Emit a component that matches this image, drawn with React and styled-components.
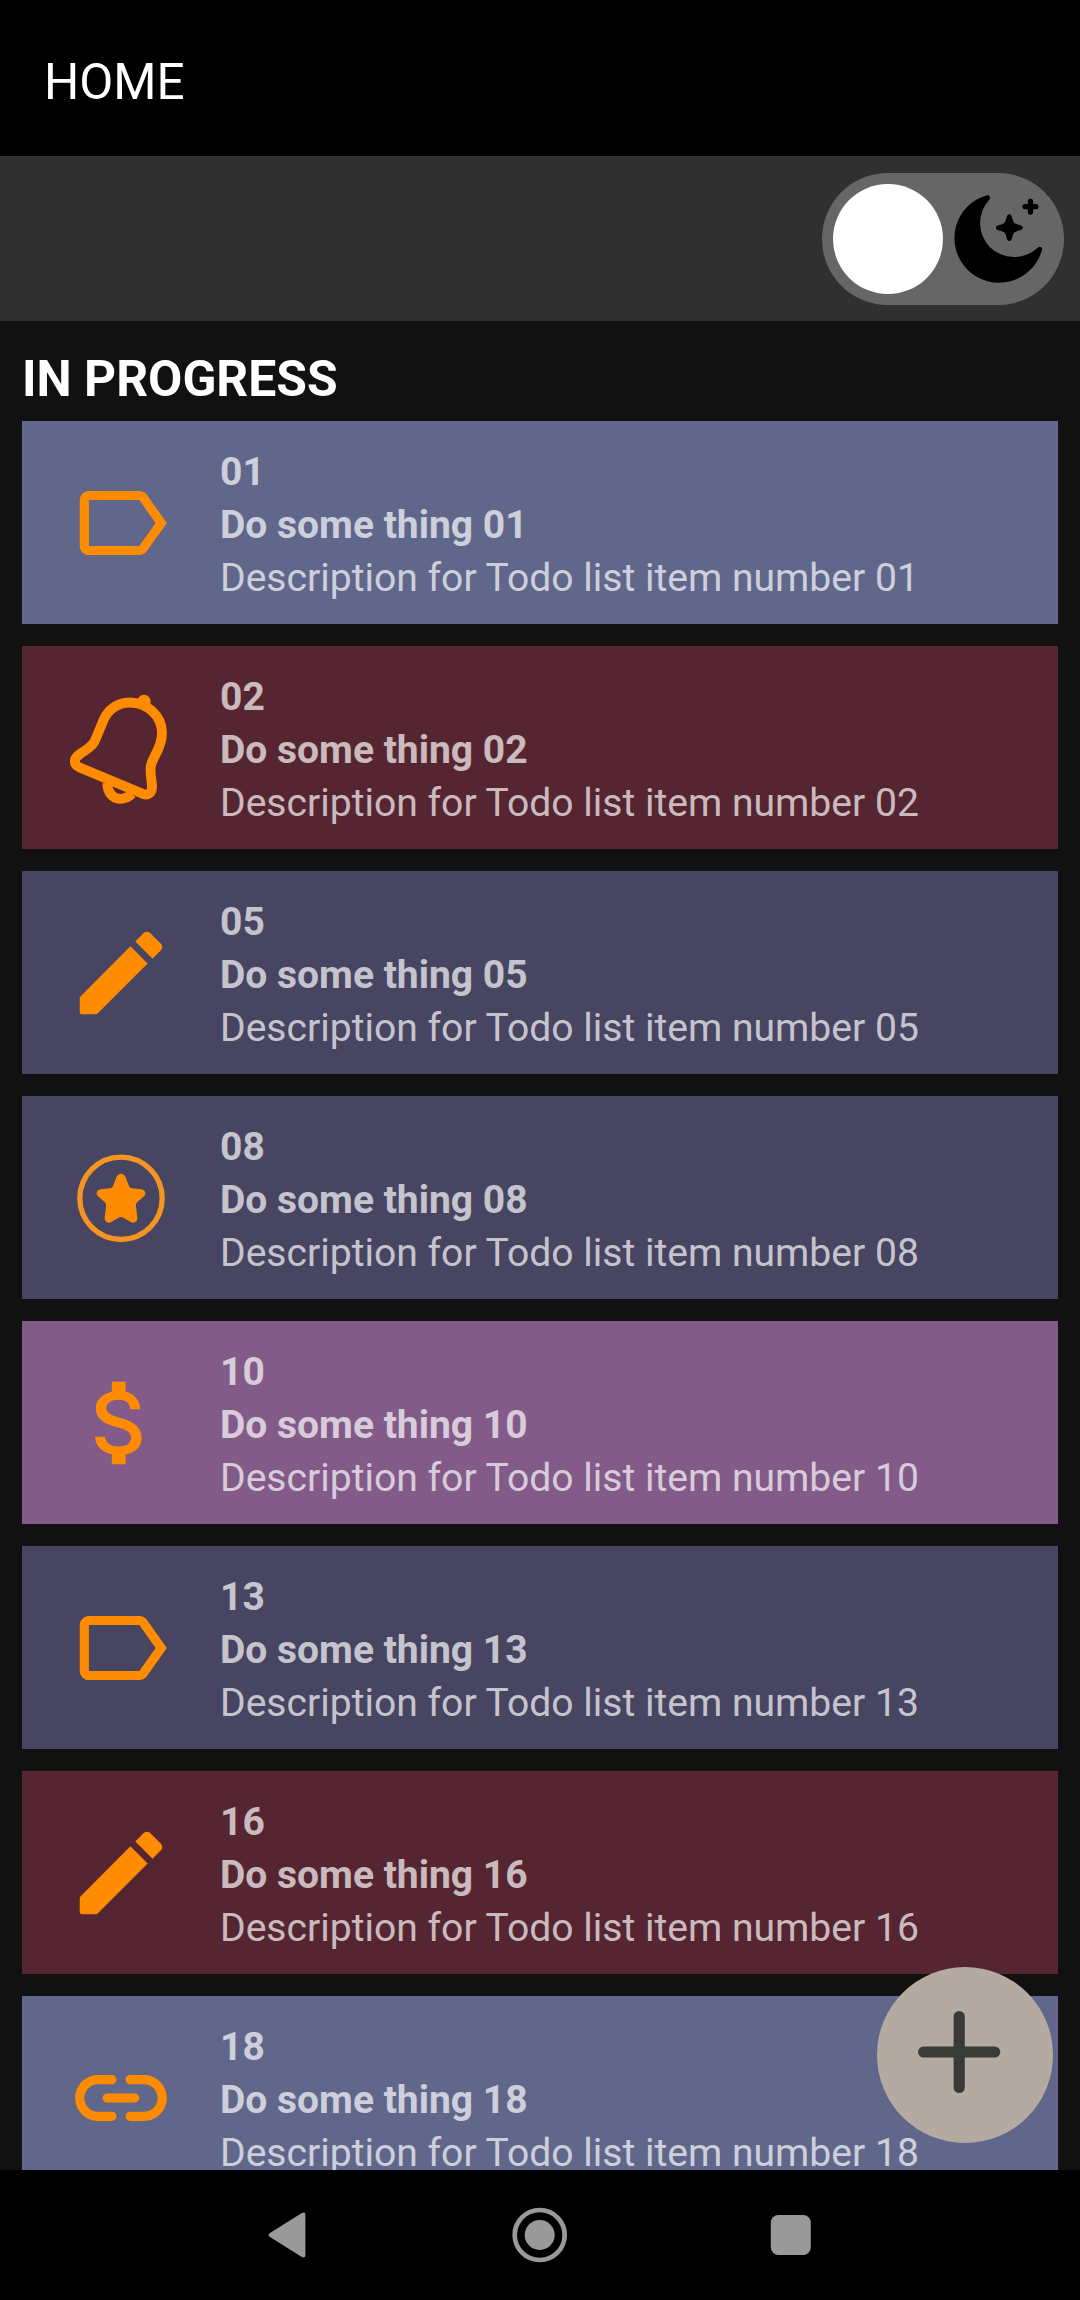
import React from "react";
import styled, { createGlobalStyle } from "styled-components";

const GlobalStyle = createGlobalStyle`
  *, *::before, *::after { box-sizing: border-box; }
  body { margin: 0; background: #000; }
`;

const Screen = styled.div`
  position: relative;
  display: flex;
  flex-direction: column;
  width: 1080px;
  height: 2300px;
  overflow: hidden;
  background: #111111;
  color: #fff;
  font-family: Roboto, "Liberation Sans", sans-serif;
`;

const Header = styled.header`
  flex: none;
  display: flex;
  align-items: center;
  height: 156px;
  padding: 8px 44px 0;
  background: #000;
`;

const HeaderTitle = styled.h1`
  margin: 0;
  font-size: 49.5px;
  font-weight: 400;
  line-height: 60px;
`;

const ThemeBar = styled.div`
  flex: none;
  display: flex;
  align-items: center;
  justify-content: flex-end;
  height: 165px;
  padding: 1px 16px 0;
  background: #303030;
`;

const Toggle = styled.button`
  display: flex;
  align-items: center;
  width: 242px;
  height: 132px;
  padding: 11px;
  border: 0;
  border-radius: 66px;
  background: #666666;
`;

const Thumb = styled.span`
  width: 110px;
  height: 110px;
  border-radius: 50%;
  background: #fff;
`;

const ToggleIcon = styled.svg`
  display: block;
  width: 110px;
  height: 110px;
`;

const Main = styled.main`
  flex: 1;
  min-height: 0;
  overflow: hidden;
  padding: 28px 22px 0;
`;

const SectionTitle = styled.h2`
  margin: 0 0 12px;
  font-size: 49.8px;
  font-weight: 700;
  line-height: 60px;
`;

const List = styled.ul`
  display: flex;
  flex-direction: column;
  gap: 22px;
  margin: 0;
  padding: 0;
  list-style: none;
`;

const Card = styled.li`
  flex: none;
  display: flex;
  align-items: center;
  gap: 44px;
  height: 203px;
  padding: 0 44px;
  background: ${(p) => p.$color};
`;

const CardIcon = styled.svg`
  flex: none;
  width: 110px;
  height: 110px;
  overflow: visible;
  fill: #ff8c00;
`;

const CardText = styled.div`
  display: flex;
  flex-direction: column;
  padding-top: 6px;
  color: rgba(255, 255, 255, 0.7);
`;

const Line = styled.span`
  font-size: ${(p) => (p.$bold ? "39px" : "39.1px")};
  line-height: 53px;
  white-space: nowrap;
  font-weight: ${(p) => (p.$bold ? 700 : 400)};
`;

const AddButton = styled.button`
  position: absolute;
  left: 877px;
  top: 1967px;
  width: 176px;
  height: 176px;
  padding: 0;
  border: 0;
  border-radius: 50%;
  background: #b4aaa1;

  svg {
    display: block;
    width: 176px;
    height: 176px;
    stroke: #383b38;
    stroke-width: 11.2;
    stroke-linecap: round;
  }
`;

const SystemBar = styled.nav`
  flex: none;
  display: flex;
  align-items: center;
  justify-content: center;
  gap: 192px;
  height: 130px;
  background: #000;

  svg {
    display: block;
    width: 60px;
    height: 60px;
    fill: #999999;
  }
`;

const LabelGlyph = () => (
  <CardIcon viewBox="0 0 24 24">
    <path d="M17.63 5.84C17.27 5.33 16.67 5 16 5L5 5.01C3.9 5.01 3 5.9 3 7v10c0 1.1.9 1.99 2 1.99L16 19c.67 0 1.27-.33 1.63-.84L22 12l-4.37-6.16zM16 17H5V7h11l3.55 5L16 17z" />
  </CardIcon>
);

const BellGlyph = () => (
  <CardIcon viewBox="198 157.5 330 330">
    <g fill="none" stroke="#ff8c00" strokeWidth="29.5" strokeLinejoin="round">
      <path d="M239 381L428 460C446 467 457 455 456 437C455 415 450 402 452 380C455 350 486 325 486 278C486 225 440 186 390 186C350 186 322 210 310 240C298 268 292 285 283 304C272 325 250 330 233 346C220 358 222 374 239 381Z" />
      <path d="M322 428C322 455 338 475 361 475C378 475 388 468 396 460" />
    </g>
    <circle cx="432" cy="183" r="20" />
  </CardIcon>
);

const PencilGlyph = () => (
  <CardIcon viewBox="0 0 24 24">
    <path d="M3 17.46v3.04c0 .28.22.5.5.5h3.04c.13 0 .26-.05.35-.15L17.81 9.94l-3.75-3.75L3.15 17.1c-.1.1-.15.22-.15.36zM20.71 7.04a.996.996 0 0 0 0-1.41l-2.34-2.34a.996.996 0 0 0-1.41 0l-1.83 1.83 3.75 3.75 1.83-1.83z" />
  </CardIcon>
);

const StarGlyph = () => (
  <CardIcon viewBox="198 157.5 330 330">
    <circle cx="363" cy="323.500" r="123.500" fill="none" stroke="#f59420" strokeWidth="16" />
    <path d="M350 259C355 247 371 247 376 259L386 284C388 290 391 292 397 293L424 296C437 298 440 311 430 319L413 334C408 338 407 343 408 349L412 381C413 395 402 400 391 394L370 382C365 379 361 379 356 382L335 394C324 400 313 395 314 381L318 349C319 343 318 338 313 334L296 319C286 311 289 298 302 296L329 293C335 292 338 290 340 284Z" />
  </CardIcon>
);

const DollarGlyph = () => (
  <CardIcon viewBox="0 0 24 24">
    <path d="M11.8 10.9c-2.27-.59-3-1.2-3-2.15 0-1.09 1.01-1.85 2.7-1.85 1.78 0 2.44.85 2.5 2.1h2.21c-.07-1.72-1.12-3.3-3.21-3.81V3h-3v2.16c-1.94.42-3.5 1.68-3.5 3.61 0 2.31 1.91 3.46 4.7 4.13 2.5.6 3 1.48 3 2.41 0 .69-.49 1.79-2.7 1.79-2.06 0-2.87-.92-2.98-2.1h-2.2c.12 2.19 1.76 3.42 3.68 3.83V21h3v-2.15c1.95-.37 3.5-1.5 3.5-3.55 0-2.84-2.43-3.81-4.7-4.4z" />
  </CardIcon>
);

const LinkGlyph = () => (
  <CardIcon viewBox="0 0 24 24">
    <path d="M17 7h-3c-.55 0-1 .45-1 1s.45 1 1 1h3c1.65 0 3 1.35 3 3s-1.35 3-3 3h-3c-.55 0-1 .45-1 1s.45 1 1 1h3c2.76 0 5-2.24 5-5s-2.24-5-5-5zm-9 5c0 .55.45 1 1 1h6c.55 0 1-.45 1-1s-.45-1-1-1H9c-.55 0-1 .45-1 1zm2 3H7c-1.65 0-3-1.35-3-3s1.35-3 3-3h3c.55 0 1-.45 1-1s-.45-1-1-1H7c-2.76 0-5 2.24-5 5s2.24 5 5 5h3c.55 0 1-.45 1-1s-.45-1-1-1z" />
  </CardIcon>
);

const MoonStars = () => (
  <ToggleIcon viewBox="489 132 330 330">
    <path d="M621 165.500A133.800 133.800 0 1 0 786 330C788 320 778 318 773 323A103 103 0 0 1 629.2 320.8A103 103 0 0 1 629 178C632 170 627 164 621 165.500Z" />
    <path
      d="M688 230Q693 249 698 253Q702 258 721 263Q702 268 698 273Q693 277 688 296Q683 277 678 273Q674 268 655 263Q674 258 678 253Q683 249 688 230Z"
      stroke="#000"
      strokeWidth="14"
      strokeLinejoin="round"
    />
    <path d="M751.5 184v32M735.5 200h32" stroke="#000" strokeWidth="16" strokeLinecap="round" />
  </ToggleIcon>
);

const todos = [
  { id: "01", color: "#60678b", Glyph: LabelGlyph },
  { id: "02", color: "#562532", Glyph: BellGlyph },
  { id: "05", color: "#474562", Glyph: PencilGlyph },
  { id: "08", color: "#474562", Glyph: StarGlyph },
  { id: "10", color: "#835b89", Glyph: DollarGlyph },
  { id: "13", color: "#474562", Glyph: LabelGlyph },
  { id: "16", color: "#562532", Glyph: PencilGlyph },
  { id: "18", color: "#60678b", Glyph: LinkGlyph },
];

export default function App() {
  return (
    <Screen>
      <GlobalStyle />
      <Header>
        <HeaderTitle>HOME</HeaderTitle>
      </Header>
      <ThemeBar>
        <Toggle aria-label="Dark theme">
          <Thumb />
          <MoonStars />
        </Toggle>
      </ThemeBar>
      <Main>
        <SectionTitle>IN PROGRESS</SectionTitle>
        <List>
          {todos.map(({ id, color, Glyph }) => (
            <Card key={id} $color={color}>
              <Glyph />
              <CardText>
                <Line $bold>{id}</Line>
                <Line $bold>Do some thing {id}</Line>
                <Line>Description for Todo list item number {id}</Line>
              </CardText>
            </Card>
          ))}
        </List>
      </Main>
      <SystemBar>
        <svg viewBox="0 0 60 60">
          <path d="M12 28L43 8.5Q47.400 6 47.400 10V50Q47.400 54 43 51.500L12 32Q9 30 12 28Z" />
        </svg>
        <svg viewBox="0 0 60 60">
          <circle cx="29.700" cy="30" r="25" fill="none" stroke="#999" strokeWidth="4.700" />
          <circle cx="29.700" cy="30" r="15" />
        </svg>
        <svg viewBox="0 0 60 60">
          <rect x="8.800" y="10" width="40" height="40" rx="7.500" />
        </svg>
      </SystemBar>
      <AddButton aria-label="Add">
        <svg viewBox="0 0 176 176">
          <path d="M82.200 49.500v71M46.700 85h71" fill="none" />
        </svg>
      </AddButton>
    </Screen>
  );
}
